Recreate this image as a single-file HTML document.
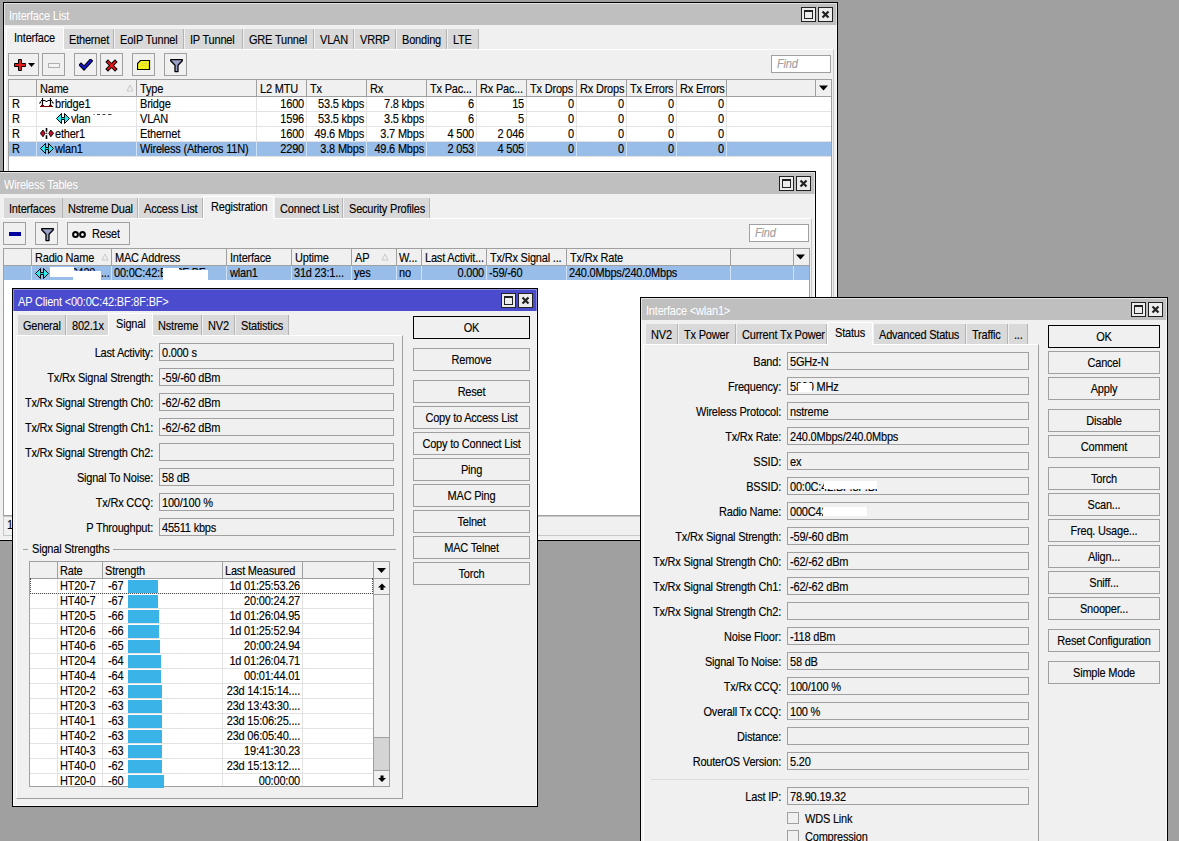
<!DOCTYPE html><html><head><meta charset="utf-8"><style>
html,body{margin:0;padding:0;width:1179px;height:841px;overflow:hidden;background:#a0a0a0;position:relative}
.a{position:absolute}
.t{position:absolute;font-family:"Liberation Sans", sans-serif;font-size:11px;line-height:13px;letter-spacing:-0.2px;white-space:pre;color:#000;transform:scaleY(1.14);transform-origin:0 10.3px;-webkit-text-stroke-width:0.12px}
</style></head><body>
<div class="a" style="left:3px;top:2px;width:835px;height:538px;background:#f0f0f0;border:1px solid #000;box-sizing:border-box"></div>
<div class="a" style="left:4px;top:3px;width:833px;height:536px;border:1px solid #f8f8f8;box-sizing:border-box"></div>
<div class="a" style="left:4px;top:3px;width:833px;height:22px;background:#bfbfbf;border:1px solid #e2e2e2;border-bottom:none;box-sizing:border-box"></div>
<div class="t" style="left:9px;top:10px;color:#ffffff;-webkit-text-stroke-width:0">Interface List</div>
<div class="a" style="left:801px;top:7px;width:15px;height:15px;background:#ececec;border:1px solid #222;box-sizing:border-box"></div>
<div class="a" style="left:804px;top:10px;width:9px;height:9px;border:1px solid #222;border-top-width:2px;box-sizing:border-box"></div>
<div class="a" style="left:818px;top:7px;width:15px;height:15px;background:#ececec;border:1px solid #222;box-sizing:border-box"></div>
<svg class="a" style="left:818px;top:7px" width="15" height="15"><path d="M4.5 4.5 L10.5 10.5 M10.5 4.5 L4.5 10.5" stroke="#222" stroke-width="2.2"/></svg>
<div class="a" style="left:5px;top:49px;width:829px;height:492px;background:#f0f0f0;border-top:1px solid #fff;border-left:1px solid #fff;border-right:1px solid #c8c8c8;box-sizing:border-box"></div>
<div class="a" style="left:64px;top:29px;width:50px;height:20px;background:#d9d9d9;border-right:1px solid #b4b4b4;box-sizing:border-box"></div>
<div class="t" style="left:69px;top:34px;">Ethernet</div>
<div class="a" style="left:115px;top:29px;width:69px;height:20px;background:#d9d9d9;border-right:1px solid #b4b4b4;box-sizing:border-box"></div>
<div class="t" style="left:120px;top:34px;">EoIP Tunnel</div>
<div class="a" style="left:185px;top:29px;width:58px;height:20px;background:#d9d9d9;border-right:1px solid #b4b4b4;box-sizing:border-box"></div>
<div class="t" style="left:190px;top:34px;">IP Tunnel</div>
<div class="a" style="left:244px;top:29px;width:70px;height:20px;background:#d9d9d9;border-right:1px solid #b4b4b4;box-sizing:border-box"></div>
<div class="t" style="left:249px;top:34px;">GRE Tunnel</div>
<div class="a" style="left:315px;top:29px;width:39px;height:20px;background:#d9d9d9;border-right:1px solid #b4b4b4;box-sizing:border-box"></div>
<div class="t" style="left:320px;top:34px;">VLAN</div>
<div class="a" style="left:355px;top:29px;width:41px;height:20px;background:#d9d9d9;border-right:1px solid #b4b4b4;box-sizing:border-box"></div>
<div class="t" style="left:360px;top:34px;">VRRP</div>
<div class="a" style="left:397px;top:29px;width:50px;height:20px;background:#d9d9d9;border-right:1px solid #b4b4b4;box-sizing:border-box"></div>
<div class="t" style="left:402px;top:34px;">Bonding</div>
<div class="a" style="left:448px;top:29px;width:31px;height:20px;background:#d9d9d9;border-right:1px solid #b4b4b4;box-sizing:border-box"></div>
<div class="t" style="left:453px;top:34px;">LTE</div>
<div class="a" style="left:6px;top:27px;width:58px;height:23px;background:#f0f0f0;border:1px solid #fff;border-bottom:none;box-sizing:border-box"></div>
<div class="t" style="left:14px;top:32px;">Interface</div>
<div class="a" style="left:8px;top:53px;width:31px;height:23px;background:#f0f0f0;border:1px solid #a0a0a0;box-sizing:border-box"></div>
<svg class="a" style="left:14px;top:59px" width="22" height="12"><path d="M4.5 0.5h3v4h4v3h-4v4h-3v-4h-4v-3h4z" fill="#e41c1c" stroke="#000" stroke-width="1"/><path d="M14 4h7l-3.5 4z" fill="#000"/></svg>
<div class="a" style="left:42px;top:53px;width:23px;height:23px;background:#f0f0f0;border:1px solid #a0a0a0;box-sizing:border-box"></div>
<div class="a" style="left:48px;top:63px;width:12px;height:5px;background:#f4f4f4;border:1px solid #b0b0b0;box-sizing:border-box"></div>
<div class="a" style="left:74px;top:53px;width:23px;height:23px;background:#f0f0f0;border:1px solid #a0a0a0;box-sizing:border-box"></div>
<svg class="a" style="left:79px;top:59px" width="14" height="12"><path d="M2 6 L5 9 L11.5 2" fill="none" stroke="#000" stroke-width="4" stroke-linecap="square"/><path d="M2 6 L5 9 L11.5 2" fill="none" stroke="#1414d0" stroke-width="2" stroke-linecap="square"/></svg>
<div class="a" style="left:100px;top:53px;width:23px;height:23px;background:#f0f0f0;border:1px solid #a0a0a0;box-sizing:border-box"></div>
<svg class="a" style="left:105px;top:59px" width="14" height="13"><path d="M3 3 L10 10 M10 3 L3 10" fill="none" stroke="#000" stroke-width="3.8" stroke-linecap="square"/><path d="M3 3 L10 10 M10 3 L3 10" fill="none" stroke="#e41818" stroke-width="1.8" stroke-linecap="square"/></svg>
<div class="a" style="left:132px;top:53px;width:23px;height:23px;background:#f0f0f0;border:1px solid #a0a0a0;box-sizing:border-box"></div>
<svg class="a" style="left:137px;top:60px" width="14" height="11"><path d="M3.5 0.5 H12.5 V9.5 H0.5 V3.5 Z" fill="#f4f020" stroke="#000" stroke-width="1.2"/><path d="M5 3.5h5M4 5.5h6" stroke="#c8c040" stroke-width="0.8" stroke-dasharray="1.2 0.8"/></svg>
<div class="a" style="left:164px;top:53px;width:23px;height:23px;background:#f0f0f0;border:1px solid #a0a0a0;box-sizing:border-box"></div>
<svg class="a" style="left:170px;top:59px" width="13" height="14"><path d="M0.7 0.7 H12.3 V1.8 L8 6.2 V12.6 H5 V6.2 L0.7 1.8 Z" fill="#9aa2c8" stroke="#000" stroke-width="1.3" stroke-linejoin="round"/></svg>
<div class="a" style="left:771px;top:55px;width:60px;height:18px;background:#fff;border:1px solid #a0a0a0;box-sizing:border-box"></div>
<div class="t" style="left:777px;top:58px;color:#a0a0a0;font-style:italic">Find</div>
<div class="a" style="left:8px;top:79px;width:824px;height:462px;background:#fff;border:1px solid #a0a0a0;box-sizing:border-box"></div>
<div class="a" style="left:8px;top:79px;width:824px;height:18px;background:#f0f0f0;border:1px solid #a0a0a0;box-sizing:border-box"></div>
<div class="a" style="left:36px;top:80px;width:1px;height:16px;background:#a0a0a0"></div>
<div class="a" style="left:136px;top:80px;width:1px;height:16px;background:#a0a0a0"></div>
<div class="a" style="left:256px;top:80px;width:1px;height:16px;background:#a0a0a0"></div>
<div class="a" style="left:306px;top:80px;width:1px;height:16px;background:#a0a0a0"></div>
<div class="a" style="left:366px;top:80px;width:1px;height:16px;background:#a0a0a0"></div>
<div class="a" style="left:426px;top:80px;width:1px;height:16px;background:#a0a0a0"></div>
<div class="a" style="left:476px;top:80px;width:1px;height:16px;background:#a0a0a0"></div>
<div class="a" style="left:526px;top:80px;width:1px;height:16px;background:#a0a0a0"></div>
<div class="a" style="left:576px;top:80px;width:1px;height:16px;background:#a0a0a0"></div>
<div class="a" style="left:626px;top:80px;width:1px;height:16px;background:#a0a0a0"></div>
<div class="a" style="left:676px;top:80px;width:1px;height:16px;background:#a0a0a0"></div>
<div class="a" style="left:726px;top:80px;width:1px;height:16px;background:#a0a0a0"></div>
<div class="a" style="left:815px;top:80px;width:1px;height:16px;background:#a0a0a0"></div>
<div class="a" style="left:36px;top:97px;width:1px;height:60px;background:#e3e3e3"></div>
<div class="a" style="left:136px;top:97px;width:1px;height:60px;background:#e3e3e3"></div>
<div class="a" style="left:256px;top:97px;width:1px;height:60px;background:#e3e3e3"></div>
<div class="a" style="left:306px;top:97px;width:1px;height:60px;background:#e3e3e3"></div>
<div class="a" style="left:366px;top:97px;width:1px;height:60px;background:#e3e3e3"></div>
<div class="a" style="left:426px;top:97px;width:1px;height:60px;background:#e3e3e3"></div>
<div class="a" style="left:476px;top:97px;width:1px;height:60px;background:#e3e3e3"></div>
<div class="a" style="left:526px;top:97px;width:1px;height:60px;background:#e3e3e3"></div>
<div class="a" style="left:576px;top:97px;width:1px;height:60px;background:#e3e3e3"></div>
<div class="a" style="left:626px;top:97px;width:1px;height:60px;background:#e3e3e3"></div>
<div class="a" style="left:676px;top:97px;width:1px;height:60px;background:#e3e3e3"></div>
<div class="a" style="left:726px;top:97px;width:1px;height:60px;background:#e3e3e3"></div>
<div class="a" style="left:9px;top:111px;width:822px;height:1px;background:#e3e3e3"></div>
<div class="a" style="left:9px;top:126px;width:822px;height:1px;background:#e3e3e3"></div>
<div class="a" style="left:9px;top:141px;width:822px;height:1px;background:#e3e3e3"></div>
<div class="a" style="left:9px;top:156px;width:822px;height:1px;background:#e3e3e3"></div>
<div class="a" style="left:9px;top:142px;width:822px;height:14px;background:#99bde9"></div>
<div class="a" style="left:36px;top:142px;width:1px;height:14px;background:#d0e2f6"></div>
<div class="a" style="left:136px;top:142px;width:1px;height:14px;background:#d0e2f6"></div>
<div class="a" style="left:256px;top:142px;width:1px;height:14px;background:#d0e2f6"></div>
<div class="a" style="left:306px;top:142px;width:1px;height:14px;background:#d0e2f6"></div>
<div class="a" style="left:366px;top:142px;width:1px;height:14px;background:#d0e2f6"></div>
<div class="a" style="left:426px;top:142px;width:1px;height:14px;background:#d0e2f6"></div>
<div class="a" style="left:476px;top:142px;width:1px;height:14px;background:#d0e2f6"></div>
<div class="a" style="left:526px;top:142px;width:1px;height:14px;background:#d0e2f6"></div>
<div class="a" style="left:576px;top:142px;width:1px;height:14px;background:#d0e2f6"></div>
<div class="a" style="left:626px;top:142px;width:1px;height:14px;background:#d0e2f6"></div>
<div class="a" style="left:676px;top:142px;width:1px;height:14px;background:#d0e2f6"></div>
<div class="a" style="left:726px;top:142px;width:1px;height:14px;background:#d0e2f6"></div>
<div class="t" style="left:40px;top:83px;">Name</div>
<div class="t" style="left:140px;top:83px;">Type</div>
<div class="t" style="left:260px;top:83px;">L2 MTU</div>
<div class="t" style="left:310px;top:83px;">Tx</div>
<div class="t" style="left:370px;top:83px;">Rx</div>
<div class="t" style="left:430px;top:83px;">Tx Pac...</div>
<div class="t" style="left:480px;top:83px;">Rx Pac...</div>
<div class="t" style="left:530px;top:83px;">Tx Drops</div>
<div class="t" style="left:580px;top:83px;">Rx Drops</div>
<div class="t" style="left:630px;top:83px;">Tx Errors</div>
<div class="t" style="left:680px;top:83px;">Rx Errors</div>
<svg class="a" style="left:819px;top:85px" width="10" height="7"><path d="M0 0.5h9l-4.5 5z" fill="#000"/></svg>
<svg class="a" style="left:126px;top:84px" width="8" height="8"><path d="M4 1 L7 7 H1z" fill="none" stroke="#c8c8c8" stroke-width="1"/></svg>
<div class="t" style="left:12px;top:98px;">R</div>
<div class="t" style="left:55px;top:98px;">bridge1</div>
<div class="t" style="left:140px;top:98px;">Bridge</div>
<div class="t" style="right:875px;top:98px;">1600</div>
<div class="t" style="right:815px;top:98px;">53.5 kbps</div>
<div class="t" style="right:755px;top:98px;">7.8 kbps</div>
<div class="t" style="right:705px;top:98px;">6</div>
<div class="t" style="right:655px;top:98px;">15</div>
<div class="t" style="right:605px;top:98px;">0</div>
<div class="t" style="right:555px;top:98px;">0</div>
<div class="t" style="right:505px;top:98px;">0</div>
<div class="t" style="right:455px;top:98px;">0</div>
<div class="t" style="left:12px;top:113px;">R</div>
<div class="t" style="left:71px;top:113px;">vlan</div>
<div class="t" style="left:140px;top:113px;">VLAN</div>
<div class="t" style="right:875px;top:113px;">1596</div>
<div class="t" style="right:815px;top:113px;">53.5 kbps</div>
<div class="t" style="right:755px;top:113px;">3.5 kbps</div>
<div class="t" style="right:705px;top:113px;">6</div>
<div class="t" style="right:655px;top:113px;">5</div>
<div class="t" style="right:605px;top:113px;">0</div>
<div class="t" style="right:555px;top:113px;">0</div>
<div class="t" style="right:505px;top:113px;">0</div>
<div class="t" style="right:455px;top:113px;">0</div>
<div class="t" style="left:12px;top:128px;">R</div>
<div class="t" style="left:55px;top:128px;">ether1</div>
<div class="t" style="left:140px;top:128px;">Ethernet</div>
<div class="t" style="right:875px;top:128px;">1600</div>
<div class="t" style="right:815px;top:128px;">49.6 Mbps</div>
<div class="t" style="right:755px;top:128px;">3.7 Mbps</div>
<div class="t" style="right:705px;top:128px;">4 500</div>
<div class="t" style="right:655px;top:128px;">2 046</div>
<div class="t" style="right:605px;top:128px;">0</div>
<div class="t" style="right:555px;top:128px;">0</div>
<div class="t" style="right:505px;top:128px;">0</div>
<div class="t" style="right:455px;top:128px;">0</div>
<div class="t" style="left:12px;top:143px;">R</div>
<div class="t" style="left:55px;top:143px;">wlan1</div>
<div class="t" style="left:140px;top:143px;">Wireless (Atheros 11N)</div>
<div class="t" style="right:875px;top:143px;">2290</div>
<div class="t" style="right:815px;top:143px;">3.8 Mbps</div>
<div class="t" style="right:755px;top:143px;">49.6 Mbps</div>
<div class="t" style="right:705px;top:143px;">2 053</div>
<div class="t" style="right:655px;top:143px;">4 505</div>
<div class="t" style="right:605px;top:143px;">0</div>
<div class="t" style="right:555px;top:143px;">0</div>
<div class="t" style="right:505px;top:143px;">0</div>
<div class="t" style="right:455px;top:143px;">0</div>
<svg class="a" style="left:39px;top:98px" width="15" height="10"><path d="M3.5 0v7.5 M11.5 0v7.5 M2 2.5h4.5 M6.5 3.5h2 M8.5 2.5h4.5 M0.5 5.5 L2 3.5 M14.5 5.5 L13 3.5" stroke="#000" stroke-width="1.2" fill="none"/><path d="M1 8 h13 v1 h-13z M2 7h3v1h-3z M10 7h3v1h-3z" fill="#7a0000"/></svg>
<svg class="a" style="left:56px;top:113px" width="14" height="11"><path d="M0.5 5.5 L5.5 0.5 V10.5Z M13.5 5.5 L8.5 0.5 V10.5Z" fill="#2ee8f0" stroke="#000" stroke-width="1" stroke-linejoin="round"/><rect x="5.5" y="4" width="3" height="3" fill="#2ee8f0"/><path d="M5.5 4.5h3 M5.5 6.5h3" stroke="#000" stroke-width="1"/></svg>
<svg class="a" style="left:40px;top:128px" width="14" height="11"><path d="M0.3 5.3 L3 2 L5 5.3 L3 8.8z M8.8 5.3 L10.8 2 L13.6 5.3 L10.8 8.8z" fill="#c01028" stroke="#000" stroke-width="0.9"/><path d="M6.5 0 v3.8 M6.5 4.8 v1 M6.5 7.3 v3.7" stroke="#000" stroke-width="1.6"/></svg>
<svg class="a" style="left:40px;top:143px" width="14" height="11"><path d="M0.5 5.5 L5.5 0.5 V10.5Z M13.5 5.5 L8.5 0.5 V10.5Z" fill="#2ee8f0" stroke="#000" stroke-width="1" stroke-linejoin="round"/><rect x="5.5" y="4" width="3" height="3" fill="#2ee8f0"/><path d="M5.5 4.5h3 M5.5 6.5h3" stroke="#000" stroke-width="1"/></svg>
<svg class="a" style="left:93px;top:113px" width="22" height="3"><path d="M0.5 1.5h1 M4 1.5h3 M9.5 1.5h3 M15 1.5h3.5" stroke="#404040" stroke-width="1"/></svg>
<div class="a" style="left:-2px;top:171px;width:818px;height:370px;background:#f0f0f0;border:1px solid #000;box-sizing:border-box"></div>
<div class="a" style="left:-1px;top:172px;width:816px;height:368px;border:1px solid #f8f8f8;box-sizing:border-box"></div>
<div class="a" style="left:-1px;top:172px;width:816px;height:22px;background:#bfbfbf;border:1px solid #e2e2e2;border-bottom:none;box-sizing:border-box"></div>
<div class="t" style="left:4px;top:179px;color:#ffffff;-webkit-text-stroke-width:0">Wireless Tables</div>
<div class="a" style="left:779px;top:176px;width:15px;height:15px;background:#ececec;border:1px solid #222;box-sizing:border-box"></div>
<div class="a" style="left:782px;top:179px;width:9px;height:9px;border:1px solid #222;border-top-width:2px;box-sizing:border-box"></div>
<div class="a" style="left:796px;top:176px;width:15px;height:15px;background:#ececec;border:1px solid #222;box-sizing:border-box"></div>
<svg class="a" style="left:796px;top:176px" width="15" height="15"><path d="M4.5 4.5 L10.5 10.5 M10.5 4.5 L4.5 10.5" stroke="#222" stroke-width="2.2"/></svg>
<div class="a" style="left:1px;top:218px;width:811px;height:320px;background:#f0f0f0;border-top:1px solid #fff;border-right:1px solid #c8c8c8;box-sizing:border-box"></div>
<div class="a" style="left:4px;top:198px;width:59px;height:20px;background:#d9d9d9;border-right:1px solid #b4b4b4;box-sizing:border-box"></div>
<div class="t" style="left:9px;top:203px;">Interfaces</div>
<div class="a" style="left:63px;top:198px;width:75px;height:20px;background:#d9d9d9;border-right:1px solid #b4b4b4;box-sizing:border-box"></div>
<div class="t" style="left:68px;top:203px;">Nstreme Dual</div>
<div class="a" style="left:139px;top:198px;width:64px;height:20px;background:#d9d9d9;border-right:1px solid #b4b4b4;box-sizing:border-box"></div>
<div class="t" style="left:144px;top:203px;">Access List</div>
<div class="a" style="left:275px;top:198px;width:68px;height:20px;background:#d9d9d9;border-right:1px solid #b4b4b4;box-sizing:border-box"></div>
<div class="t" style="left:280px;top:203px;">Connect List</div>
<div class="a" style="left:344px;top:198px;width:86px;height:20px;background:#d9d9d9;border-right:1px solid #b4b4b4;box-sizing:border-box"></div>
<div class="t" style="left:349px;top:203px;">Security Profiles</div>
<div class="a" style="left:203px;top:196px;width:71px;height:23px;background:#f0f0f0;border:1px solid #fff;border-bottom:none;box-sizing:border-box"></div>
<div class="t" style="left:211px;top:201px;">Registration</div>
<div class="a" style="left:3px;top:222px;width:23px;height:23px;background:#f0f0f0;border:1px solid #a0a0a0;box-sizing:border-box"></div>
<div class="a" style="left:9px;top:232px;width:12px;height:4px;background:#0000a0"></div>
<div class="a" style="left:35px;top:222px;width:23px;height:23px;background:#f0f0f0;border:1px solid #a0a0a0;box-sizing:border-box"></div>
<svg class="a" style="left:41px;top:228px" width="13" height="14"><path d="M0.7 0.7 H12.3 V1.8 L8 6.2 V12.6 H5 V6.2 L0.7 1.8 Z" fill="#9aa2c8" stroke="#000" stroke-width="1.3" stroke-linejoin="round"/></svg>
<div class="a" style="left:67px;top:222px;width:63px;height:23px;background:#f0f0f0;border:1px solid #a0a0a0;box-sizing:border-box"></div>
<svg class="a" style="left:72px;top:230px" width="15" height="9"><ellipse cx="3.5" cy="4.5" rx="2.4" ry="2.6" fill="none" stroke="#000" stroke-width="2"/><ellipse cx="10.5" cy="4.5" rx="2.4" ry="2.6" fill="none" stroke="#000" stroke-width="2"/></svg>
<div class="t" style="left:92px;top:228px;">Reset</div>
<div class="a" style="left:749px;top:224px;width:60px;height:18px;background:#fff;border:1px solid #a0a0a0;box-sizing:border-box"></div>
<div class="t" style="left:755px;top:227px;color:#a0a0a0;font-style:italic">Find</div>
<div class="a" style="left:3px;top:248px;width:807px;height:268px;background:#fff;border:1px solid #a0a0a0;box-sizing:border-box"></div>
<div class="a" style="left:3px;top:248px;width:807px;height:18px;background:#f0f0f0;border:1px solid #a0a0a0;box-sizing:border-box"></div>
<div class="a" style="left:31px;top:249px;width:1px;height:16px;background:#a0a0a0"></div>
<div class="a" style="left:111px;top:249px;width:1px;height:16px;background:#a0a0a0"></div>
<div class="a" style="left:226px;top:249px;width:1px;height:16px;background:#a0a0a0"></div>
<div class="a" style="left:291px;top:249px;width:1px;height:16px;background:#a0a0a0"></div>
<div class="a" style="left:351px;top:249px;width:1px;height:16px;background:#a0a0a0"></div>
<div class="a" style="left:396px;top:249px;width:1px;height:16px;background:#a0a0a0"></div>
<div class="a" style="left:421px;top:249px;width:1px;height:16px;background:#a0a0a0"></div>
<div class="a" style="left:486px;top:249px;width:1px;height:16px;background:#a0a0a0"></div>
<div class="a" style="left:566px;top:249px;width:1px;height:16px;background:#a0a0a0"></div>
<div class="a" style="left:730px;top:249px;width:1px;height:16px;background:#a0a0a0"></div>
<div class="a" style="left:793px;top:249px;width:1px;height:16px;background:#a0a0a0"></div>
<div class="a" style="left:4px;top:266px;width:805px;height:14px;background:#99bde9"></div>
<div class="a" style="left:31px;top:266px;width:1px;height:14px;background:#d0e2f6"></div>
<div class="a" style="left:111px;top:266px;width:1px;height:14px;background:#d0e2f6"></div>
<div class="a" style="left:226px;top:266px;width:1px;height:14px;background:#d0e2f6"></div>
<div class="a" style="left:291px;top:266px;width:1px;height:14px;background:#d0e2f6"></div>
<div class="a" style="left:351px;top:266px;width:1px;height:14px;background:#d0e2f6"></div>
<div class="a" style="left:396px;top:266px;width:1px;height:14px;background:#d0e2f6"></div>
<div class="a" style="left:421px;top:266px;width:1px;height:14px;background:#d0e2f6"></div>
<div class="a" style="left:486px;top:266px;width:1px;height:14px;background:#d0e2f6"></div>
<div class="a" style="left:566px;top:266px;width:1px;height:14px;background:#d0e2f6"></div>
<div class="a" style="left:730px;top:266px;width:1px;height:14px;background:#d0e2f6"></div>
<div class="a" style="left:793px;top:266px;width:1px;height:14px;background:#d0e2f6"></div>
<div class="t" style="left:35px;top:252px;">Radio Name</div>
<div class="t" style="left:115px;top:252px;">MAC Address</div>
<div class="t" style="left:230px;top:252px;">Interface</div>
<div class="t" style="left:295px;top:252px;">Uptime</div>
<div class="t" style="left:355px;top:252px;">AP</div>
<div class="t" style="left:399px;top:252px;">W...</div>
<div class="t" style="left:425px;top:252px;">Last Activit...</div>
<div class="t" style="left:490px;top:252px;">Tx/Rx Signal ...</div>
<div class="t" style="left:570px;top:252px;">Tx/Rx Rate</div>
<svg class="a" style="left:796px;top:254px" width="10" height="7"><path d="M0 0.5h9l-4.5 5z" fill="#000"/></svg>
<svg class="a" style="left:101px;top:253px" width="8" height="8"><path d="M4 1 L7 7 H1z" fill="none" stroke="#c8c8c8" stroke-width="1"/></svg>
<svg class="a" style="left:381px;top:253px" width="8" height="8"><path d="M4 1 L7 7 H1z" fill="none" stroke="#c8c8c8" stroke-width="1"/></svg>
<svg class="a" style="left:35px;top:268px" width="14" height="11"><path d="M0.5 5.5 L5.5 0.5 V10.5Z M13.5 5.5 L8.5 0.5 V10.5Z" fill="#2ee8f0" stroke="#000" stroke-width="1" stroke-linejoin="round"/><rect x="5.5" y="4" width="3" height="3" fill="#2ee8f0"/><path d="M5.5 4.5h3 M5.5 6.5h3" stroke="#000" stroke-width="1"/></svg>
<div class="t" style="left:52px;top:267px;">000C428</div>
<div class="a" style="left:50px;top:267px;width:24px;height:10px;background:#fff"></div>
<div class="a" style="left:73px;top:271px;width:28px;height:9px;background:#fff"></div>
<div class="t" style="left:101px;top:267px;">...</div>
<div class="t" style="left:114px;top:267px;">00:0C:42:BF:8F:BF</div>
<div class="a" style="left:163px;top:268px;width:16px;height:12px;background:#fff"></div>
<div class="a" style="left:178px;top:270px;width:30px;height:10px;background:#fff"></div>
<div class="t" style="left:230px;top:267px;">wlan1</div>
<div class="t" style="left:294px;top:267px;">31d 23:1...</div>
<div class="t" style="left:354px;top:267px;">yes</div>
<div class="t" style="left:399px;top:267px;">no</div>
<div class="t" style="right:695px;top:267px;">0.000</div>
<div class="t" style="left:489px;top:267px;">-59/-60</div>
<div class="t" style="left:569px;top:267px;">240.0Mbps/240.0Mbps</div>
<div class="a" style="left:3px;top:516px;width:807px;height:20px;background:#f0f0f0;border:1px solid #c8c8c8;box-sizing:border-box"></div>
<div class="t" style="left:7px;top:519px;">1</div>
<div class="a" style="left:12px;top:288px;width:526px;height:519px;background:#f0f0f0;border:1px solid #000;box-sizing:border-box"></div>
<div class="a" style="left:13px;top:289px;width:524px;height:517px;border:1px solid #f8f8f8;box-sizing:border-box"></div>
<div class="a" style="left:13px;top:289px;width:524px;height:22px;background:#4b4bcd;border:1px solid #8c8cd8;border-bottom:none;box-sizing:border-box"></div>
<div class="t" style="left:18px;top:296px;color:#ffffff;-webkit-text-stroke-width:0">AP Client &lt;00:0C:42:BF:8F:BF&gt;</div>
<div class="a" style="left:501px;top:293px;width:15px;height:15px;background:#ececec;border:1px solid #222;box-sizing:border-box"></div>
<div class="a" style="left:504px;top:296px;width:9px;height:9px;border:1px solid #222;border-top-width:2px;box-sizing:border-box"></div>
<div class="a" style="left:518px;top:293px;width:15px;height:15px;background:#ececec;border:1px solid #222;box-sizing:border-box"></div>
<svg class="a" style="left:518px;top:293px" width="15" height="15"><path d="M4.5 4.5 L10.5 10.5 M10.5 4.5 L4.5 10.5" stroke="#222" stroke-width="2.2"/></svg>
<div class="a" style="left:16px;top:335px;width:387px;height:464px;background:#f0f0f0;border-top:1px solid #fff;border-left:1px solid #fff;border-right:1px solid #a0a0a0;border-bottom:1px solid #a0a0a0;box-sizing:border-box"></div>
<div class="a" style="left:18px;top:315px;width:48px;height:20px;background:#d9d9d9;border-right:1px solid #b4b4b4;box-sizing:border-box"></div>
<div class="t" style="left:23px;top:320px;">General</div>
<div class="a" style="left:67px;top:315px;width:42px;height:20px;background:#d9d9d9;border-right:1px solid #b4b4b4;box-sizing:border-box"></div>
<div class="t" style="left:72px;top:320px;">802.1x</div>
<div class="a" style="left:153px;top:315px;width:49px;height:20px;background:#d9d9d9;border-right:1px solid #b4b4b4;box-sizing:border-box"></div>
<div class="t" style="left:158px;top:320px;">Nstreme</div>
<div class="a" style="left:203px;top:315px;width:32px;height:20px;background:#d9d9d9;border-right:1px solid #b4b4b4;box-sizing:border-box"></div>
<div class="t" style="left:208px;top:320px;">NV2</div>
<div class="a" style="left:236px;top:315px;width:53px;height:20px;background:#d9d9d9;border-right:1px solid #b4b4b4;box-sizing:border-box"></div>
<div class="t" style="left:241px;top:320px;">Statistics</div>
<div class="a" style="left:108px;top:313px;width:45px;height:23px;background:#f0f0f0;border:1px solid #fff;border-bottom:none;box-sizing:border-box"></div>
<div class="t" style="left:116px;top:318px;">Signal</div>
<div class="a" style="left:159px;top:343px;width:235px;height:18px;background:#f0f0f0;border:1px solid #a0a0a0;box-sizing:border-box"></div>
<div class="t" style="left:162px;top:347px;">0.000 s</div>
<div class="t" style="right:1026px;top:347px;">Last Activity:</div>
<div class="a" style="left:159px;top:368px;width:235px;height:18px;background:#f0f0f0;border:1px solid #a0a0a0;box-sizing:border-box"></div>
<div class="t" style="left:162px;top:372px;">-59/-60 dBm</div>
<div class="t" style="right:1026px;top:372px;">Tx/Rx Signal Strength:</div>
<div class="a" style="left:159px;top:393px;width:235px;height:18px;background:#f0f0f0;border:1px solid #a0a0a0;box-sizing:border-box"></div>
<div class="t" style="left:162px;top:397px;">-62/-62 dBm</div>
<div class="t" style="right:1026px;top:397px;">Tx/Rx Signal Strength Ch0:</div>
<div class="a" style="left:159px;top:418px;width:235px;height:18px;background:#f0f0f0;border:1px solid #a0a0a0;box-sizing:border-box"></div>
<div class="t" style="left:162px;top:422px;">-62/-62 dBm</div>
<div class="t" style="right:1026px;top:422px;">Tx/Rx Signal Strength Ch1:</div>
<div class="a" style="left:159px;top:443px;width:235px;height:18px;background:#f0f0f0;border:1px solid #a0a0a0;box-sizing:border-box"></div>
<div class="t" style="right:1026px;top:447px;">Tx/Rx Signal Strength Ch2:</div>
<div class="a" style="left:159px;top:468px;width:235px;height:18px;background:#f0f0f0;border:1px solid #a0a0a0;box-sizing:border-box"></div>
<div class="t" style="left:162px;top:472px;">58 dB</div>
<div class="t" style="right:1026px;top:472px;">Signal To Noise:</div>
<div class="a" style="left:159px;top:493px;width:235px;height:18px;background:#f0f0f0;border:1px solid #a0a0a0;box-sizing:border-box"></div>
<div class="t" style="left:162px;top:497px;">100/100 %</div>
<div class="t" style="right:1026px;top:497px;">Tx/Rx CCQ:</div>
<div class="a" style="left:159px;top:518px;width:235px;height:18px;background:#f0f0f0;border:1px solid #a0a0a0;box-sizing:border-box"></div>
<div class="t" style="left:162px;top:522px;">45511 kbps</div>
<div class="t" style="right:1026px;top:522px;">P Throughput:</div>
<div class="a" style="left:413px;top:316px;width:117px;height:23px;background:#f0f0f0;border:1px solid #000;box-sizing:border-box"></div>
<div class="t" style="left:413px;width:117px;text-align:center;top:322px;">OK</div>
<div class="a" style="left:413px;top:348px;width:117px;height:23px;background:#f0f0f0;border:1px solid #a0a0a0;box-sizing:border-box"></div>
<div class="t" style="left:413px;width:117px;text-align:center;top:354px;">Remove</div>
<div class="a" style="left:413px;top:380px;width:117px;height:23px;background:#f0f0f0;border:1px solid #a0a0a0;box-sizing:border-box"></div>
<div class="t" style="left:413px;width:117px;text-align:center;top:386px;">Reset</div>
<div class="a" style="left:413px;top:406px;width:117px;height:23px;background:#f0f0f0;border:1px solid #a0a0a0;box-sizing:border-box"></div>
<div class="t" style="left:413px;width:117px;text-align:center;top:412px;">Copy to Access List</div>
<div class="a" style="left:413px;top:432px;width:117px;height:23px;background:#f0f0f0;border:1px solid #a0a0a0;box-sizing:border-box"></div>
<div class="t" style="left:413px;width:117px;text-align:center;top:438px;">Copy to Connect List</div>
<div class="a" style="left:413px;top:458px;width:117px;height:23px;background:#f0f0f0;border:1px solid #a0a0a0;box-sizing:border-box"></div>
<div class="t" style="left:413px;width:117px;text-align:center;top:464px;">Ping</div>
<div class="a" style="left:413px;top:484px;width:117px;height:23px;background:#f0f0f0;border:1px solid #a0a0a0;box-sizing:border-box"></div>
<div class="t" style="left:413px;width:117px;text-align:center;top:490px;">MAC Ping</div>
<div class="a" style="left:413px;top:510px;width:117px;height:23px;background:#f0f0f0;border:1px solid #a0a0a0;box-sizing:border-box"></div>
<div class="t" style="left:413px;width:117px;text-align:center;top:516px;">Telnet</div>
<div class="a" style="left:413px;top:536px;width:117px;height:23px;background:#f0f0f0;border:1px solid #a0a0a0;box-sizing:border-box"></div>
<div class="t" style="left:413px;width:117px;text-align:center;top:542px;">MAC Telnet</div>
<div class="a" style="left:413px;top:562px;width:117px;height:23px;background:#f0f0f0;border:1px solid #a0a0a0;box-sizing:border-box"></div>
<div class="t" style="left:413px;width:117px;text-align:center;top:568px;">Torch</div>
<div class="a" style="left:23px;top:549px;width:5px;height:1px;background:#a0a0a0"></div>
<div class="t" style="left:32px;top:543px;">Signal Strengths</div>
<div class="a" style="left:113px;top:549px;width:283px;height:1px;background:#a0a0a0"></div>
<div class="a" style="left:29px;top:561px;width:361px;height:226px;background:#fff;border:1px solid #a0a0a0;box-sizing:border-box"></div>
<div class="a" style="left:29px;top:561px;width:361px;height:18px;background:#f0f0f0;border:1px solid #a0a0a0;box-sizing:border-box"></div>
<div class="a" style="left:57px;top:562px;width:1px;height:16px;background:#a0a0a0"></div>
<div class="a" style="left:102px;top:562px;width:1px;height:16px;background:#a0a0a0"></div>
<div class="a" style="left:222px;top:562px;width:1px;height:16px;background:#a0a0a0"></div>
<div class="a" style="left:302px;top:562px;width:1px;height:16px;background:#a0a0a0"></div>
<div class="a" style="left:373px;top:562px;width:1px;height:16px;background:#a0a0a0"></div>
<div class="t" style="left:60px;top:565px;">Rate</div>
<div class="t" style="left:105px;top:565px;">Strength</div>
<div class="t" style="left:225px;top:565px;">Last Measured</div>
<svg class="a" style="left:377px;top:568px" width="10" height="7"><path d="M0 0h9l-4.5 5z" fill="#000"/></svg>
<div class="a" style="left:57px;top:579px;width:1px;height:207px;background:#e3e3e3"></div>
<div class="a" style="left:102px;top:579px;width:1px;height:207px;background:#e3e3e3"></div>
<div class="a" style="left:222px;top:579px;width:1px;height:207px;background:#e3e3e3"></div>
<div class="a" style="left:302px;top:579px;width:1px;height:207px;background:#e3e3e3"></div>
<div class="t" style="left:60px;top:580px;">HT20-7</div>
<div class="t" style="left:108px;top:580px;">-67</div>
<div class="a" style="left:128px;top:580px;width:30px;height:13px;background:#3ab4e8"></div>
<div class="t" style="right:879px;top:580px;">1d 01:25:53.26</div>
<div class="a" style="left:30px;top:593px;width:343px;height:1px;background:#e3e3e3"></div>
<div class="t" style="left:60px;top:595px;">HT40-7</div>
<div class="t" style="left:108px;top:595px;">-67</div>
<div class="a" style="left:128px;top:595px;width:30px;height:13px;background:#3ab4e8"></div>
<div class="t" style="right:879px;top:595px;">20:00:24.27</div>
<div class="a" style="left:30px;top:608px;width:343px;height:1px;background:#e3e3e3"></div>
<div class="t" style="left:60px;top:610px;">HT20-5</div>
<div class="t" style="left:108px;top:610px;">-66</div>
<div class="a" style="left:128px;top:610px;width:31px;height:13px;background:#3ab4e8"></div>
<div class="t" style="right:879px;top:610px;">1d 01:26:04.95</div>
<div class="a" style="left:30px;top:623px;width:343px;height:1px;background:#e3e3e3"></div>
<div class="t" style="left:60px;top:625px;">HT20-6</div>
<div class="t" style="left:108px;top:625px;">-66</div>
<div class="a" style="left:128px;top:625px;width:31px;height:13px;background:#3ab4e8"></div>
<div class="t" style="right:879px;top:625px;">1d 01:25:52.94</div>
<div class="a" style="left:30px;top:638px;width:343px;height:1px;background:#e3e3e3"></div>
<div class="t" style="left:60px;top:640px;">HT40-6</div>
<div class="t" style="left:108px;top:640px;">-65</div>
<div class="a" style="left:128px;top:640px;width:32px;height:13px;background:#3ab4e8"></div>
<div class="t" style="right:879px;top:640px;">20:00:24.94</div>
<div class="a" style="left:30px;top:653px;width:343px;height:1px;background:#e3e3e3"></div>
<div class="t" style="left:60px;top:655px;">HT20-4</div>
<div class="t" style="left:108px;top:655px;">-64</div>
<div class="a" style="left:128px;top:655px;width:33px;height:13px;background:#3ab4e8"></div>
<div class="t" style="right:879px;top:655px;">1d 01:26:04.71</div>
<div class="a" style="left:30px;top:668px;width:343px;height:1px;background:#e3e3e3"></div>
<div class="t" style="left:60px;top:670px;">HT40-4</div>
<div class="t" style="left:108px;top:670px;">-64</div>
<div class="a" style="left:128px;top:670px;width:33px;height:13px;background:#3ab4e8"></div>
<div class="t" style="right:879px;top:670px;">00:01:44.01</div>
<div class="a" style="left:30px;top:683px;width:343px;height:1px;background:#e3e3e3"></div>
<div class="t" style="left:60px;top:685px;">HT20-2</div>
<div class="t" style="left:108px;top:685px;">-63</div>
<div class="a" style="left:128px;top:685px;width:34px;height:13px;background:#3ab4e8"></div>
<div class="t" style="right:879px;top:685px;">23d 14:15:14....</div>
<div class="a" style="left:30px;top:698px;width:343px;height:1px;background:#e3e3e3"></div>
<div class="t" style="left:60px;top:700px;">HT20-3</div>
<div class="t" style="left:108px;top:700px;">-63</div>
<div class="a" style="left:128px;top:700px;width:34px;height:13px;background:#3ab4e8"></div>
<div class="t" style="right:879px;top:700px;">23d 13:43:30....</div>
<div class="a" style="left:30px;top:713px;width:343px;height:1px;background:#e3e3e3"></div>
<div class="t" style="left:60px;top:715px;">HT40-1</div>
<div class="t" style="left:108px;top:715px;">-63</div>
<div class="a" style="left:128px;top:715px;width:34px;height:13px;background:#3ab4e8"></div>
<div class="t" style="right:879px;top:715px;">23d 15:06:25....</div>
<div class="a" style="left:30px;top:728px;width:343px;height:1px;background:#e3e3e3"></div>
<div class="t" style="left:60px;top:730px;">HT40-2</div>
<div class="t" style="left:108px;top:730px;">-63</div>
<div class="a" style="left:128px;top:730px;width:34px;height:13px;background:#3ab4e8"></div>
<div class="t" style="right:879px;top:730px;">23d 06:05:40....</div>
<div class="a" style="left:30px;top:743px;width:343px;height:1px;background:#e3e3e3"></div>
<div class="t" style="left:60px;top:745px;">HT40-3</div>
<div class="t" style="left:108px;top:745px;">-63</div>
<div class="a" style="left:128px;top:745px;width:34px;height:13px;background:#3ab4e8"></div>
<div class="t" style="right:879px;top:745px;">19:41:30.23</div>
<div class="a" style="left:30px;top:758px;width:343px;height:1px;background:#e3e3e3"></div>
<div class="t" style="left:60px;top:760px;">HT40-0</div>
<div class="t" style="left:108px;top:760px;">-62</div>
<div class="a" style="left:128px;top:760px;width:34px;height:13px;background:#3ab4e8"></div>
<div class="t" style="right:879px;top:760px;">23d 15:13:12....</div>
<div class="a" style="left:30px;top:773px;width:343px;height:1px;background:#e3e3e3"></div>
<div class="t" style="left:60px;top:775px;">HT20-0</div>
<div class="t" style="left:108px;top:775px;">-60</div>
<div class="a" style="left:128px;top:775px;width:36px;height:13px;background:#3ab4e8"></div>
<div class="t" style="right:879px;top:775px;">00:00:00</div>
<div class="a" style="left:30px;top:578px;width:343px;height:16px;border:1px dotted #505050;border-top:none;box-sizing:border-box"></div>
<div class="a" style="left:373px;top:579px;width:16px;height:207px;background:#f0f0f0;border-left:1px solid #a0a0a0;box-sizing:border-box"></div>
<div class="a" style="left:374px;top:594px;width:15px;height:1px;background:#a0a0a0"></div>
<div class="a" style="left:374px;top:737px;width:15px;height:34px;background:#d4d4d4;border-top:1px solid #a0a0a0;border-bottom:1px solid #a0a0a0;box-sizing:border-box"></div>
<svg class="a" style="left:377px;top:583px" width="10" height="8"><path d="M1 4.5 L5 0.5 L9 4.5z" fill="#000"/><rect x="3.5" y="4" width="3" height="3" fill="#000"/></svg>
<svg class="a" style="left:377px;top:775px" width="10" height="8"><path d="M1 3 L5 7 L9 3z" fill="#000"/><rect x="3.5" y="0.5" width="3" height="3" fill="#000"/></svg>
<div class="a" style="left:640px;top:297px;width:528px;height:564px;background:#f0f0f0;border:1px solid #000;box-sizing:border-box"></div>
<div class="a" style="left:641px;top:298px;width:526px;height:562px;border:1px solid #f8f8f8;box-sizing:border-box"></div>
<div class="a" style="left:641px;top:298px;width:526px;height:22px;background:#bfbfbf;border:1px solid #e2e2e2;border-bottom:none;box-sizing:border-box"></div>
<div class="t" style="left:646px;top:305px;color:#ffffff;-webkit-text-stroke-width:0">Interface &lt;wlan1&gt;</div>
<div class="a" style="left:1131px;top:302px;width:15px;height:15px;background:#ececec;border:1px solid #222;box-sizing:border-box"></div>
<div class="a" style="left:1134px;top:305px;width:9px;height:9px;border:1px solid #222;border-top-width:2px;box-sizing:border-box"></div>
<div class="a" style="left:1148px;top:302px;width:15px;height:15px;background:#ececec;border:1px solid #222;box-sizing:border-box"></div>
<svg class="a" style="left:1148px;top:302px" width="15" height="15"><path d="M4.5 4.5 L10.5 10.5 M10.5 4.5 L4.5 10.5" stroke="#222" stroke-width="2.2"/></svg>
<div class="a" style="left:643px;top:344px;width:396px;height:517px;background:#f0f0f0;border-top:1px solid #fff;border-left:1px solid #fff;border-right:1px solid #a0a0a0;box-sizing:border-box"></div>
<div class="a" style="left:646px;top:324px;width:32px;height:20px;background:#d9d9d9;border-right:1px solid #b4b4b4;box-sizing:border-box"></div>
<div class="t" style="left:651px;top:329px;">NV2</div>
<div class="a" style="left:679px;top:324px;width:57px;height:20px;background:#d9d9d9;border-right:1px solid #b4b4b4;box-sizing:border-box"></div>
<div class="t" style="left:684px;top:329px;">Tx Power</div>
<div class="a" style="left:737px;top:324px;width:90px;height:20px;background:#d9d9d9;border-right:1px solid #b4b4b4;box-sizing:border-box"></div>
<div class="t" style="left:742px;top:329px;">Current Tx Power</div>
<div class="a" style="left:874px;top:324px;width:92px;height:20px;background:#d9d9d9;border-right:1px solid #b4b4b4;box-sizing:border-box"></div>
<div class="t" style="left:879px;top:329px;">Advanced Status</div>
<div class="a" style="left:967px;top:324px;width:41px;height:20px;background:#d9d9d9;border-right:1px solid #b4b4b4;box-sizing:border-box"></div>
<div class="t" style="left:972px;top:329px;">Traffic</div>
<div class="a" style="left:1009px;top:324px;width:19px;height:20px;background:#d9d9d9;border-right:1px solid #b4b4b4;box-sizing:border-box"></div>
<div class="t" style="left:1014px;top:329px;">...</div>
<div class="a" style="left:827px;top:322px;width:46px;height:23px;background:#f0f0f0;border:1px solid #fff;border-bottom:none;box-sizing:border-box"></div>
<div class="t" style="left:835px;top:327px;">Status</div>
<div class="a" style="left:787px;top:352px;width:242px;height:18px;background:#f0f0f0;border:1px solid #a0a0a0;box-sizing:border-box"></div>
<div class="t" style="left:790px;top:356px;">5GHz-N</div>
<div class="t" style="right:398px;top:356px;">Band:</div>
<div class="a" style="left:787px;top:377px;width:242px;height:18px;background:#f0f0f0;border:1px solid #a0a0a0;box-sizing:border-box"></div>
<div class="t" style="left:790px;top:381px;">5800 MHz</div>
<div class="t" style="right:398px;top:381px;">Frequency:</div>
<div class="a" style="left:787px;top:402px;width:242px;height:18px;background:#f0f0f0;border:1px solid #a0a0a0;box-sizing:border-box"></div>
<div class="t" style="left:790px;top:406px;">nstreme</div>
<div class="t" style="right:398px;top:406px;">Wireless Protocol:</div>
<div class="a" style="left:787px;top:427px;width:242px;height:18px;background:#f0f0f0;border:1px solid #a0a0a0;box-sizing:border-box"></div>
<div class="t" style="left:790px;top:431px;">240.0Mbps/240.0Mbps</div>
<div class="t" style="right:398px;top:431px;">Tx/Rx Rate:</div>
<div class="a" style="left:787px;top:452px;width:242px;height:18px;background:#f0f0f0;border:1px solid #a0a0a0;box-sizing:border-box"></div>
<div class="t" style="left:790px;top:456px;">ex</div>
<div class="t" style="right:398px;top:456px;">SSID:</div>
<div class="a" style="left:787px;top:477px;width:242px;height:18px;background:#f0f0f0;border:1px solid #a0a0a0;box-sizing:border-box"></div>
<div class="t" style="left:790px;top:481px;">00:0C:42:BF:8F:BF</div>
<div class="t" style="right:398px;top:481px;">BSSID:</div>
<div class="a" style="left:787px;top:502px;width:242px;height:18px;background:#f0f0f0;border:1px solid #a0a0a0;box-sizing:border-box"></div>
<div class="t" style="left:790px;top:506px;">000C42BF8FBF</div>
<div class="t" style="right:398px;top:506px;">Radio Name:</div>
<div class="a" style="left:787px;top:527px;width:242px;height:18px;background:#f0f0f0;border:1px solid #a0a0a0;box-sizing:border-box"></div>
<div class="t" style="left:790px;top:531px;">-59/-60 dBm</div>
<div class="t" style="right:398px;top:531px;">Tx/Rx Signal Strength:</div>
<div class="a" style="left:787px;top:552px;width:242px;height:18px;background:#f0f0f0;border:1px solid #a0a0a0;box-sizing:border-box"></div>
<div class="t" style="left:790px;top:556px;">-62/-62 dBm</div>
<div class="t" style="right:398px;top:556px;">Tx/Rx Signal Strength Ch0:</div>
<div class="a" style="left:787px;top:577px;width:242px;height:18px;background:#f0f0f0;border:1px solid #a0a0a0;box-sizing:border-box"></div>
<div class="t" style="left:790px;top:581px;">-62/-62 dBm</div>
<div class="t" style="right:398px;top:581px;">Tx/Rx Signal Strength Ch1:</div>
<div class="a" style="left:787px;top:602px;width:242px;height:18px;background:#f0f0f0;border:1px solid #a0a0a0;box-sizing:border-box"></div>
<div class="t" style="right:398px;top:606px;">Tx/Rx Signal Strength Ch2:</div>
<div class="a" style="left:787px;top:627px;width:242px;height:18px;background:#f0f0f0;border:1px solid #a0a0a0;box-sizing:border-box"></div>
<div class="t" style="left:790px;top:631px;">-118 dBm</div>
<div class="t" style="right:398px;top:631px;">Noise Floor:</div>
<div class="a" style="left:787px;top:652px;width:242px;height:18px;background:#f0f0f0;border:1px solid #a0a0a0;box-sizing:border-box"></div>
<div class="t" style="left:790px;top:656px;">58 dB</div>
<div class="t" style="right:398px;top:656px;">Signal To Noise:</div>
<div class="a" style="left:787px;top:677px;width:242px;height:18px;background:#f0f0f0;border:1px solid #a0a0a0;box-sizing:border-box"></div>
<div class="t" style="left:790px;top:681px;">100/100 %</div>
<div class="t" style="right:398px;top:681px;">Tx/Rx CCQ:</div>
<div class="a" style="left:787px;top:702px;width:242px;height:18px;background:#f0f0f0;border:1px solid #a0a0a0;box-sizing:border-box"></div>
<div class="t" style="left:790px;top:706px;">100 %</div>
<div class="t" style="right:398px;top:706px;">Overall Tx CCQ:</div>
<div class="a" style="left:787px;top:727px;width:242px;height:18px;background:#f0f0f0;border:1px solid #a0a0a0;box-sizing:border-box"></div>
<div class="t" style="right:398px;top:731px;">Distance:</div>
<div class="a" style="left:787px;top:752px;width:242px;height:18px;background:#f0f0f0;border:1px solid #a0a0a0;box-sizing:border-box"></div>
<div class="t" style="left:790px;top:756px;">5.20</div>
<div class="t" style="right:398px;top:756px;">RouterOS Version:</div>
<div class="a" style="left:798px;top:383px;width:14px;height:9px;background:#fff"></div>
<div class="a" style="left:824px;top:481px;width:56px;height:8px;background:#fff"></div>
<div class="a" style="left:877px;top:480px;width:10px;height:14px;background:#f0f0f0"></div>
<div class="a" style="left:823px;top:507px;width:44px;height:9px;background:#fff"></div>
<div class="a" style="left:651px;top:779px;width:378px;height:1px;background:#dcdcdc"></div>
<div class="a" style="left:787px;top:787px;width:242px;height:18px;background:#f0f0f0;border:1px solid #a0a0a0;box-sizing:border-box"></div>
<div class="t" style="left:790px;top:791px;">78.90.19.32</div>
<div class="t" style="right:398px;top:791px;">Last IP:</div>
<div class="a" style="left:787px;top:812px;width:12px;height:12px;background:#f0f0f0;border:1px solid #a0a0a0;box-sizing:border-box"></div>
<div class="t" style="left:805px;top:813px;">WDS Link</div>
<div class="a" style="left:787px;top:830px;width:12px;height:12px;background:#f0f0f0;border:1px solid #a0a0a0;box-sizing:border-box"></div>
<div class="t" style="left:805px;top:831px;">Compression</div>
<div class="a" style="left:1048px;top:325px;width:112px;height:23px;background:#f0f0f0;border:1px solid #000;box-sizing:border-box"></div>
<div class="t" style="left:1048px;width:112px;text-align:center;top:331px;">OK</div>
<div class="a" style="left:1048px;top:351px;width:112px;height:23px;background:#f0f0f0;border:1px solid #a0a0a0;box-sizing:border-box"></div>
<div class="t" style="left:1048px;width:112px;text-align:center;top:357px;">Cancel</div>
<div class="a" style="left:1048px;top:377px;width:112px;height:23px;background:#f0f0f0;border:1px solid #a0a0a0;box-sizing:border-box"></div>
<div class="t" style="left:1048px;width:112px;text-align:center;top:383px;">Apply</div>
<div class="a" style="left:1048px;top:409px;width:112px;height:23px;background:#f0f0f0;border:1px solid #a0a0a0;box-sizing:border-box"></div>
<div class="t" style="left:1048px;width:112px;text-align:center;top:415px;">Disable</div>
<div class="a" style="left:1048px;top:435px;width:112px;height:23px;background:#f0f0f0;border:1px solid #a0a0a0;box-sizing:border-box"></div>
<div class="t" style="left:1048px;width:112px;text-align:center;top:441px;">Comment</div>
<div class="a" style="left:1048px;top:467px;width:112px;height:23px;background:#f0f0f0;border:1px solid #a0a0a0;box-sizing:border-box"></div>
<div class="t" style="left:1048px;width:112px;text-align:center;top:473px;">Torch</div>
<div class="a" style="left:1048px;top:493px;width:112px;height:23px;background:#f0f0f0;border:1px solid #a0a0a0;box-sizing:border-box"></div>
<div class="t" style="left:1048px;width:112px;text-align:center;top:499px;">Scan...</div>
<div class="a" style="left:1048px;top:519px;width:112px;height:23px;background:#f0f0f0;border:1px solid #a0a0a0;box-sizing:border-box"></div>
<div class="t" style="left:1048px;width:112px;text-align:center;top:525px;">Freq. Usage...</div>
<div class="a" style="left:1048px;top:545px;width:112px;height:23px;background:#f0f0f0;border:1px solid #a0a0a0;box-sizing:border-box"></div>
<div class="t" style="left:1048px;width:112px;text-align:center;top:551px;">Align...</div>
<div class="a" style="left:1048px;top:571px;width:112px;height:23px;background:#f0f0f0;border:1px solid #a0a0a0;box-sizing:border-box"></div>
<div class="t" style="left:1048px;width:112px;text-align:center;top:577px;">Sniff...</div>
<div class="a" style="left:1048px;top:597px;width:112px;height:23px;background:#f0f0f0;border:1px solid #a0a0a0;box-sizing:border-box"></div>
<div class="t" style="left:1048px;width:112px;text-align:center;top:603px;">Snooper...</div>
<div class="a" style="left:1048px;top:629px;width:112px;height:23px;background:#f0f0f0;border:1px solid #a0a0a0;box-sizing:border-box"></div>
<div class="t" style="left:1048px;width:112px;text-align:center;top:635px;">Reset Configuration</div>
<div class="a" style="left:1048px;top:661px;width:112px;height:23px;background:#f0f0f0;border:1px solid #a0a0a0;box-sizing:border-box"></div>
<div class="t" style="left:1048px;width:112px;text-align:center;top:667px;">Simple Mode</div>
</body></html>
